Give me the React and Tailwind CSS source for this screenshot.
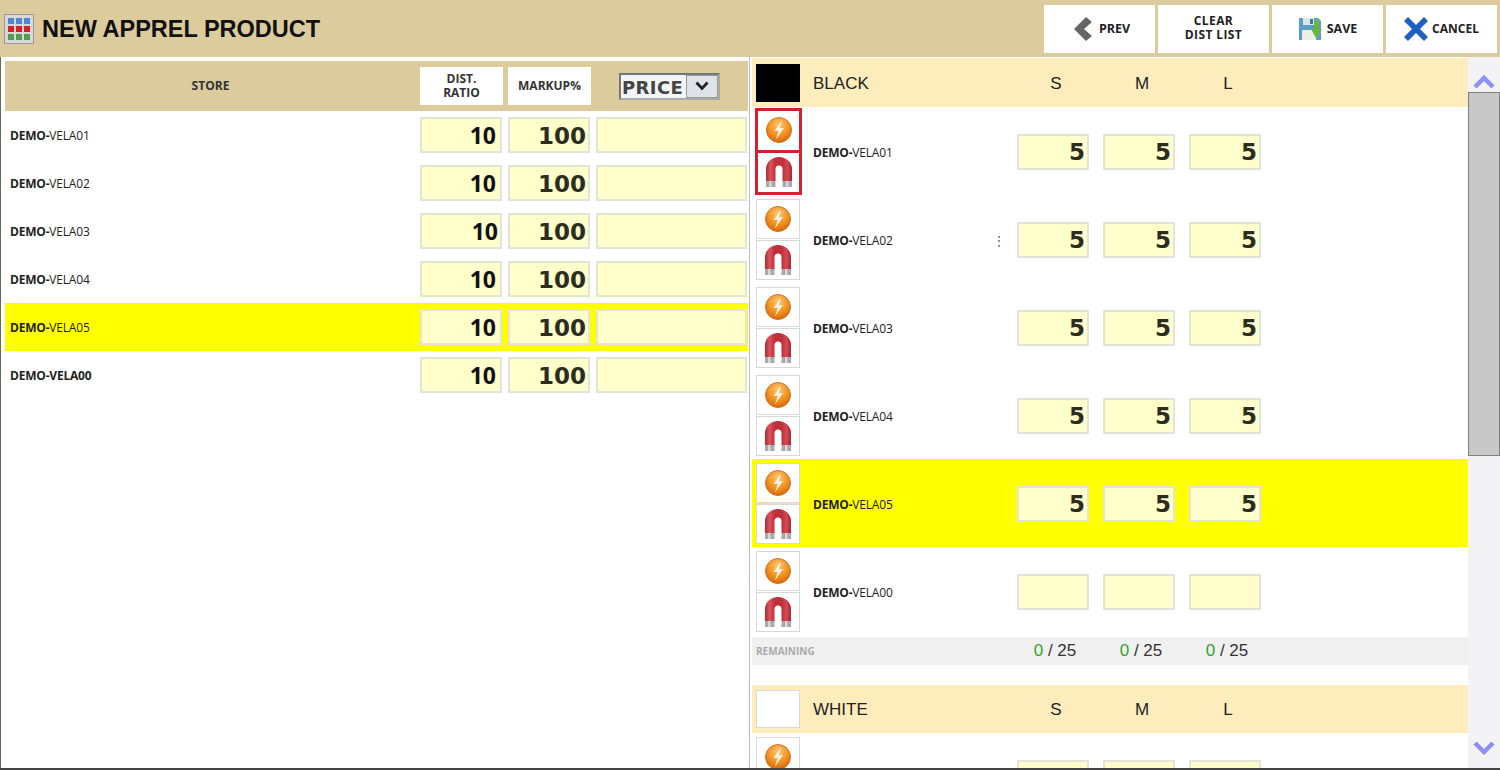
import React from "react";

const stores = ["DEMO-VELA01", "DEMO-VELA02", "DEMO-VELA03", "DEMO-VELA04", "DEMO-VELA05", "DEMO-VELA00"];
const sizes = ["S", "M", "L"];

// store label: the bold DEMO part is heavier than the rest
function StoreName({ name, bold }) {
  const [a, b] = name.split("-");
  return (
    <span className="font-['Open_Sans',sans-serif] text-[12px] leading-none text-[#222] tracking-[-0.2px]">
      <span className="font-bold">{a}-</span>
      <span className={bold ? "font-bold" : "font-normal"}>{b}</span>
    </span>
  );
}

function AppIcon() {
  return (
    <div className="w-[30px] h-[30px] border border-[#9a9a9a] bg-[#d8d8d8] grid grid-cols-3 gap-[2px] p-[3px] mr-[8px]">
      {[0, 1, 2].map((r) =>
        [0, 1, 2].map((c) => (
          <div key={r + "-" + c} className={r === 0 ? "bg-[#4f86d8]" : r === 1 ? "bg-[#d8202a]" : "bg-[#4f9e4f]"} />
        ))
      )}
    </div>
  );
}

function BoltOrb() {
  return (
    <svg width="28" height="28" viewBox="0 0 28 28">
      <defs>
        <radialGradient id="orb" cx="50%" cy="30%" r="75%">
          <stop offset="0%" stopColor="#fcc777" />
          <stop offset="55%" stopColor="#f2921f" />
          <stop offset="100%" stopColor="#cf5f0c" />
        </radialGradient>
      </defs>
      <circle cx="14" cy="14" r="12.5" fill="url(#orb)" stroke="#c4600f" strokeWidth="0.8" />
      <path d="M17 4.5 L9.5 15 L13.5 15 L11 23.5 L19 12 L15 12 Z" fill="#fff1dd" />
    </svg>
  );
}

function Magnet() {
  return (
    <svg width="30" height="32" viewBox="0 0 30 32">
      <defs>
        <linearGradient id="mag" x1="0" y1="0" x2="1" y2="0">
          <stop offset="0%" stopColor="#b02a36" />
          <stop offset="18%" stopColor="#d9555f" />
          <stop offset="35%" stopColor="#c1303c" />
          <stop offset="65%" stopColor="#c1303c" />
          <stop offset="82%" stopColor="#d44a55" />
          <stop offset="100%" stopColor="#a92632" />
        </linearGradient>
      </defs>
      <path d="M2 25 V13 a13 12 0 0 1 26 0 V25 H18.5 V13 a3.5 3.5 0 0 0 -7 0 V25 Z" fill="url(#mag)" />
      <rect x="2" y="25" width="9.5" height="6" fill="#a9a9ad" />
      <rect x="18.5" y="25" width="9.5" height="6" fill="#a9a9ad" />
      <rect x="5" y="25" width="2.5" height="6" fill="#d6d6d8" />
      <rect x="22" y="25" width="2.5" height="6" fill="#d6d6d8" />
    </svg>
  );
}

function PrevIcon() {
  return (
    <svg width="18" height="24" viewBox="0 0 18 24">
      <path d="M12 0 L18 5 L10 12 L18 19 L12 24 L0 12 Z" fill="#666" />
    </svg>
  );
}

function SaveIcon() {
  return (
    <svg width="24" height="24" viewBox="0 0 24 24">
      <path d="M1 1 H20 L23 4 V23 H1 Z" fill="#5b9fc4" />
      <rect x="5" y="1" width="11" height="7" fill="#d9e8ef" />
      <rect x="12" y="2" width="3" height="5" fill="#3a7a9e" />
      <rect x="4" y="13" width="14" height="10" fill="#f0eee2" />
      <path d="M16 3 L21 3 L21 12 L24 12 L18 21 L13 12 L16 12 Z" fill="#6cb33f" />
    </svg>
  );
}

function CancelIcon() {
  return (
    <svg width="24" height="24" viewBox="0 0 24 24">
      <path d="M4 0 L12 8 L20 0 L24 4 L16 12 L24 20 L20 24 L12 16 L4 24 L0 20 L8 12 L0 4 Z" fill="#1f5fc0" />
    </svg>
  );
}

function TopButton({ icon, children, className }) {
  return (
    <button className={`w-[111px] h-[48px] bg-white flex items-center justify-center font-['Open_Sans',sans-serif] font-bold leading-[14px] text-[#222] ${className}`}>
      {icon}
      <span>{children}</span>
    </button>
  );
}

function Field({ className, value, font }) {
  return (
    <div className={`h-[36px] bg-[#ffffcc] border-2 border-[#e3e3d6] flex items-center justify-end text-[#2c2c20] font-bold ${font} ${className}`}>
      {value}
    </div>
  );
}

function StoreRow({ name, hl, nudge }) {
  return (
    <div className={`h-[48px] flex items-center ${hl ? "bg-[#ffff00]" : ""}`}>
      <div className="w-[415px] pl-[5px] pb-[2px]">
        <StoreName name={name} bold={name === "DEMO-VELA00"} />
      </div>
      <Field className={`w-[82px] ${nudge ? "pr-[2px]" : "pr-[4px]"} text-[#111]`} value="10" font="font-['Open_Sans',sans-serif] text-[23px]" />
      <Field className="w-[82px] ml-[6px] pr-[2px] pt-[2px]" value="100" font="font-['DejaVu_Sans',sans-serif] text-[23px]" />
      <Field className="w-[151px] ml-[6px]" value="" font="" />
    </div>
  );
}

function IconBox({ children }) {
  return (
    <div className="w-[44px] h-[40px] flex items-center justify-center bg-white border border-[#d8d8d8]">
      {children}
    </div>
  );
}

function DistRow({ name, hl, active, dots, empty }) {
  return (
    <div className={`h-[88px] flex items-center ${hl ? "bg-[#ffff00]" : ""}`}>
      {active ? (
        <div className="ml-[3px] w-[47px] h-[87px] border-[3px] border-[#d4202f] flex flex-col bg-white">
          <div className="h-[42px] flex items-center justify-center border-b-[3px] border-[#d4202f]">
            <BoltOrb />
          </div>
          <div className="flex-1 flex items-center justify-center">
            <Magnet />
          </div>
        </div>
      ) : (
        <div className="ml-[4px] w-[44px] flex flex-col gap-[1px]">
          <IconBox><BoltOrb /></IconBox>
          <IconBox><Magnet /></IconBox>
        </div>
      )}
      <div className={`${active ? "ml-[11px]" : "ml-[13px]"} w-[192px] flex justify-between items-center pt-[4px]`}>
        {name && <StoreName name={name} />}
        {dots && <span className="text-[12px] leading-none text-[#557]">⋮</span>}
      </div>
      <div className="ml-[12px] mt-[2px] flex gap-[14px]">
        {sizes.map((s) => (
          <Field
            key={s}
            className="w-[72px] pr-[2px]"
            value={empty ? "" : "5"}
            font="font-['DejaVu_Sans',sans-serif] text-[23px]"
          />
        ))}
      </div>
    </div>
  );
}

function ColorHeader({ name, swatch, height }) {
  return (
    <div className={`${height} bg-[#fdedbc] flex items-center font-['Liberation_Sans',sans-serif] text-[17px] text-[#222]`}>
      <div className={`ml-[4px] w-[44px] h-[38px] ${swatch}`} />
      <div className="ml-[13px] w-[206px] pt-[2px]">{name}</div>
      <div className="flex gap-[14px] pt-[2px] pl-px">
        {sizes.map((s) => (
          <div key={s} className="w-[72px] text-center">{s}</div>
        ))}
      </div>
    </div>
  );
}

export default function App() {
  return (
    <div className="w-[1500px] h-[770px] overflow-hidden bg-white flex flex-col">
      {/* top bar */}
      <div className="h-[57px] shrink-0 bg-[#dccb9c] flex items-center justify-between pl-[4px] pr-[3px]">
        <div className="flex items-center">
          <AppIcon />
          <div className="font-['Liberation_Sans',sans-serif] font-bold text-[23.5px] text-[#111] pt-[2px]">
            NEW APPREL PRODUCT
          </div>
        </div>
        <div className="flex gap-[3px]">
          <TopButton icon={<PrevIcon />} className="gap-[7px] pl-[5px] text-[12.5px]">PREV</TopButton>
          <TopButton className="text-[12px] tracking-[0.4px] pb-[2px]">
            CLEAR
            <br />
            DIST LIST
          </TopButton>
          <TopButton icon={<SaveIcon />} className="gap-[5px] text-[12.5px]">SAVE</TopButton>
          <TopButton icon={<CancelIcon />} className="gap-[4px] text-[12px]">CANCEL</TopButton>
        </div>
      </div>

      <div className="flex-1 min-h-0 flex border-b-2 border-[#444]">
        {/* stores */}
        <div className="w-[750px] shrink-0 border-r border-[#bdbdbd] border-l border-l-[#5f6f5f] pl-[4px] pr-[1px] pt-[4px]">
          <div className="h-[50px] bg-[#dccb9c] flex items-center font-['Open_Sans',sans-serif] font-bold text-[12px] text-[#333]">
            <div className="w-[411px] mr-[4px] text-center">STORE</div>
            <div className="w-[83px] h-[38px] bg-white flex flex-col items-center justify-center text-center leading-[14px]">
              <span>DIST.</span>
              <span>RATIO</span>
            </div>
            <div className="w-[83px] h-[38px] ml-[5px] bg-white flex items-center justify-center">MARKUP%</div>
            <div className="ml-[28px] w-[101px] h-[27px] bg-[#f2f4f8] border-2 border-[#777] border-r-[#aaa] border-b-[#aaa] flex items-center font-['DejaVu_Sans',sans-serif] text-[18px] text-[#444] tracking-[0.4px]">
              <span className="pl-[1px] pt-[3px] flex-1 leading-none">PRICE</span>
              <span className="w-[32px] h-full bg-[#dfe2e9] border border-[#999] flex items-center justify-center">
                <svg width="14" height="10" viewBox="0 0 14 10">
                  <path d="M1.5 1.5 L7 7.5 L12.5 1.5" fill="none" stroke="#222" strokeWidth="2.8" />
                </svg>
              </span>
            </div>
          </div>
          {stores.map((n, i) => (
            <StoreRow key={n} name={n} hl={i === 4} nudge={i === 2} />
          ))}
        </div>

        {/* distribution */}
        <div className="flex-1 min-w-0 overflow-hidden pl-[2px] pt-px">
          <ColorHeader name="BLACK" swatch="bg-black" height="h-[49px]" />
          {stores.map((n, i) => (
            <DistRow key={n} name={n} hl={i === 4} active={i === 0} dots={i === 1} empty={i === 5} />
          ))}
          <div className="h-[28px] mt-[2px] bg-[#f0f0f0] flex items-center font-['Liberation_Sans',sans-serif]">
            <div className="ml-[4px] w-[263px] font-['Open_Sans',sans-serif] font-bold text-[10px] text-[#aaa]">REMAINING</div>
            <div className="flex gap-[14px] text-[17px] text-[#333]">
              {sizes.map((s) => (
                <div key={s} className="w-[72px] text-center">
                  <span className="text-[#2fa52f]">0</span> / 25
                </div>
              ))}
            </div>
          </div>
          <div className="h-[20px]" />
          <ColorHeader name="WHITE" swatch="bg-white border border-[#d8d8d8]" height="h-[48px]" />
          {/* next row is cut by the window, its label falls below the fold */}
          <DistRow empty />
        </div>

        {/* scrollbar */}
        <div className="w-[32px] shrink-0 bg-[#f3f3f6] flex flex-col items-center">
          <div className="h-[35px] shrink-0 flex items-end justify-center pb-[3px]">
            <svg width="22" height="14" viewBox="0 0 22 14">
              <path d="M2 12 L11 3 L20 12" fill="none" stroke="#8f8ffa" strokeWidth="4.5" />
            </svg>
          </div>
          <div className="w-full h-[364px] shrink-0 bg-[#c8c8c8] border border-[#808080]" />
          <div className="flex-1 flex items-end pb-[13px]">
            <svg width="22" height="14" viewBox="0 0 22 14">
              <path d="M2 2 L11 11 L20 2" fill="none" stroke="#8f8ffa" strokeWidth="4.5" />
            </svg>
          </div>
        </div>
      </div>
    </div>
  );
}
